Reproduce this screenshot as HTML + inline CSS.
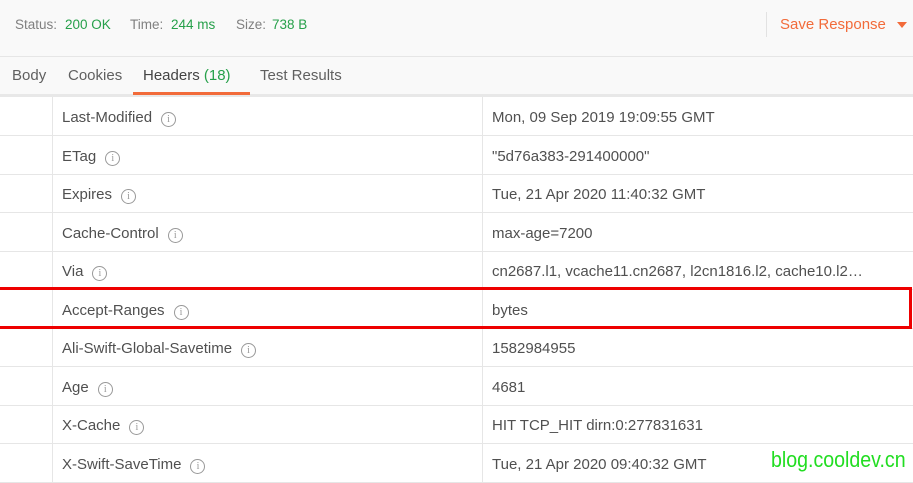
<!DOCTYPE html>
<html><head><meta charset="utf-8"><style>
*{margin:0;padding:0;box-sizing:border-box}
body{width:913px;height:470px;overflow:hidden;background:#fff;font-family:"Liberation Sans",sans-serif;color:#505050;position:relative}
.top{position:absolute;left:0;top:0;width:913px;height:57px;background:#f9f9f9;border-bottom:1px solid #e6e6e6;font-size:13.5px}
.top span{position:absolute;top:17px}
.g{color:#26a04a}
.l{color:#808080}
.sep{position:absolute;left:766px;top:12px;width:1px;height:25px;background:#e2e2e2}
.save{position:absolute;left:780px;top:16px;color:#f26b3a;font-size:15px}
.tri{position:absolute;left:897px;top:22px;width:0;height:0;border-left:5px solid transparent;border-right:5px solid transparent;border-top:6px solid #f26b3a}
.tabs{position:absolute;left:0;top:57px;width:913px;height:40px;background:#f9f9f9;border-bottom:3px solid #e8e8e8;font-size:15px}
.tabs .t{position:absolute;top:10px;color:#606060}
.tabs .g{color:#26a04a}
.ul{position:absolute;left:133px;top:92px;width:117px;height:3px;background:#f26b3a}
.row{position:absolute;left:0;width:913px;height:39px;border-bottom:1px solid #e6e6e6;font-size:15px}
.row .c1{position:absolute;left:52px;top:0;bottom:-1px;border-left:1px solid #e6e6e6}
.row .c2{position:absolute;left:482px;top:0;bottom:-1px;border-left:1px solid #e6e6e6}
.row .k{position:absolute;left:62px;top:12px}
.row .v{position:absolute;left:492px;top:12px;white-space:nowrap}
.i{display:inline-block;width:15px;height:15px;border:1px solid #999;border-radius:50%;font-size:10px;line-height:13px;text-align:center;color:#999;margin-left:9px;vertical-align:0px;font-family:"Liberation Serif",serif}
.red{position:absolute;left:-3px;top:287px;width:915px;height:42px;border:3px solid #e00;}
.wm{position:absolute;left:771px;top:447px;color:#22dd22;font-size:22px;font-family:"Liberation Sans Narrow","Liberation Sans",sans-serif;background:#fff;transform:scaleX(0.89);transform-origin:left top;white-space:nowrap}
</style></head><body>
<div class="top">
<span class="l" style="left:15px">Status:</span><span class="g" style="left:65px">200 OK</span>
<span class="l" style="left:130px">Time:</span><span class="g" style="left:171px">244 ms</span>
<span class="l" style="left:236px">Size:</span><span class="g" style="left:272px">738 B</span>
<div class="sep"></div><div class="save">Save Response</div><div class="tri"></div>
</div>
<div class="tabs">
<span class="t" style="left:12px">Body</span><span class="t" style="left:68px">Cookies</span><span class="t" style="left:143px;color:#444">Headers <span class="g">(18)</span></span><span class="t" style="left:260px">Test Results</span>
</div>
<div class="ul"></div>
<div class="row" style="top:97px"><div class="c1"></div><div class="c2"></div><div class="k">Last-Modified<span class="i">i</span></div><div class="v">Mon, 09 Sep 2019 19:09:55 GMT</div></div>
<div class="row" style="top:136px"><div class="c1"></div><div class="c2"></div><div class="k">ETag<span class="i">i</span></div><div class="v">"5d76a383-291400000"</div></div>
<div class="row" style="top:174px"><div class="c1"></div><div class="c2"></div><div class="k">Expires<span class="i">i</span></div><div class="v">Tue, 21 Apr 2020 11:40:32 GMT</div></div>
<div class="row" style="top:213px"><div class="c1"></div><div class="c2"></div><div class="k">Cache-Control<span class="i">i</span></div><div class="v">max-age=7200</div></div>
<div class="row" style="top:251px"><div class="c1"></div><div class="c2"></div><div class="k">Via<span class="i">i</span></div><div class="v">cn2687.l1, vcache11.cn2687, l2cn1816.l2, cache10.l2…</div></div>
<div class="row" style="top:290px"><div class="c1"></div><div class="c2"></div><div class="k">Accept-Ranges<span class="i">i</span></div><div class="v">bytes</div></div>
<div class="row" style="top:328px"><div class="c1"></div><div class="c2"></div><div class="k">Ali-Swift-Global-Savetime<span class="i">i</span></div><div class="v">1582984955</div></div>
<div class="row" style="top:367px"><div class="c1"></div><div class="c2"></div><div class="k">Age<span class="i">i</span></div><div class="v">4681</div></div>
<div class="row" style="top:405px"><div class="c1"></div><div class="c2"></div><div class="k">X-Cache<span class="i">i</span></div><div class="v">HIT TCP_HIT dirn:0:277831631</div></div>
<div class="row" style="top:444px"><div class="c1"></div><div class="c2"></div><div class="k">X-Swift-SaveTime<span class="i">i</span></div><div class="v">Tue, 21 Apr 2020 09:40:32 GMT</div></div>
<div class="red"></div>
<div class="wm">blog.cooldev.cn</div>
</body></html>
